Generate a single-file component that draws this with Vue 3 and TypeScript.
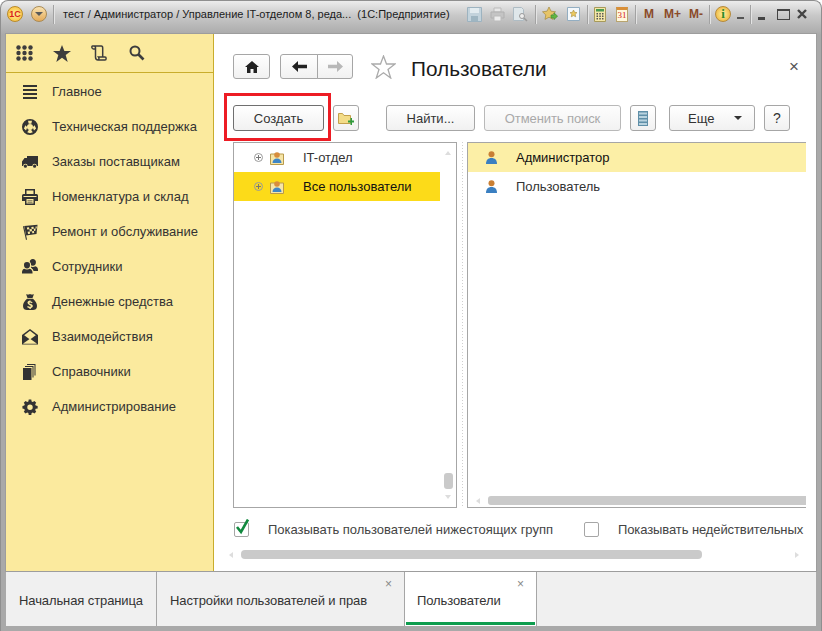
<script setup lang="ts">
interface Part { d: string; fill: string; t?: string }
interface MenuItem { label: string; parts: Part[] }
const ink = '#333333'
const bg = '#fbea9e'
const menu: MenuItem[] = [
  { label: 'Главное', parts: [{ d: 'M1 1h14v2H1zM1 5h14v2H1zM1 9h14v2H1zM1 13h14v2H1z', fill: ink }] },
  { label: 'Техническая поддержка', parts: [
    { d: 'M8 0a8 8 0 1 0 0 16A8 8 0 0 0 8 0zm0 5a3 3 0 1 1 0 6 3 3 0 0 1 0-6z', fill: ink },
    { d: 'M6 1.800h4L9.300 4.800H6.700zM1.900 9.500 3.400 6.200 5.300 8.300 4 11.500zM14.100 9.500 12.600 6.200 10.700 8.300 12 11.500zM5.200 13.200 6.800 11h2.400l1.600 2.200L8 14.200z', fill: bg }
  ] },
  { label: 'Заказы поставщикам', parts: [
    { d: 'M5 2h11v10h-1.200a2.200 2.200 0 0 0-4.400 0H5.600a2.200 2.200 0 0 0-4.400 0H0V7.500L2.500 4H5z', fill: ink },
    { d: 'M3.400 10.600a1.600 1.600 0 1 0 0 3.200 1.600 1.600 0 0 0 0-3.200zM12.600 10.600a1.600 1.600 0 1 0 0 3.200 1.600 1.600 0 0 0 0-3.200z', fill: ink }
  ] },
  { label: 'Номенклатура и склад', parts: [
    { d: 'M3 0h10v5h1.500A1.500 1.500 0 0 1 16 6.500V12h-3v4H3v-4H0V6.500A1.500 1.500 0 0 1 1.500 5H3z', fill: ink },
    { d: 'M4.500 1.500h7V5h-7zM4.500 10h7v4.500h-7zM1.500 7h13v1h-13z', fill: bg },
    { d: 'M5.500 11.500h5v.8h-5zM5.500 13h5v.6h-5z', fill: ink }
  ] },
  { label: 'Ремонт и обслуживание', parts: [
    { d: 'M1 2.500 2 2 5 15.500 4 16z', fill: ink },
    { d: 'M2.200 2 15.500 .8 14.500 10 4.200 11.500z', fill: ink },
    { d: 'M4.800 3.500 7 3.200 7.400 5.300 5.200 5.600zM9.300 3l2.200-.3.300 2.100-2.100.3zM13.600 2.500l1.200-.1-.2 2-1 .1zM7.400 5.300 9.700 5.100 10 7.200l-2.200.3zM11.800 4.800l1.800-.3-.2 2.200-1.400.2zM5.600 7.800 7.800 7.500l.3 2.200-2 .3zM10 7.200l1.900-.3.300 2.100-1.900.3z', fill: bg }
  ] },
  { label: 'Сотрудники', parts: [
    { d: 'M10.800 0a3 3 0 0 1 3.100 3.300c0 2-1 3.400-3.100 3.400S7.700 5.300 7.700 3.300A3 3 0 0 1 10.800 0zM8.300 7.300c1.500 1 3.500 1 5 0 1.800.5 2.700 1.500 2.700 3.400V12h-5z', fill: ink },
    { d: 'M5 1.800a4.100 4.100 0 0 1 4.100 4.400c0 1-.3 1.900-.7 2.600 2.300.6 3.300 2.300 3.300 4.600v1.600H-.8v-1.600c0-2.300 1-4 2.900-4.600-.4-.7-.7-1.600-.7-2.600A4.100 4.100 0 0 1 5 1.800z', fill: bg },
    { d: 'M5 3a3 3 0 0 1 3 3.200C8 8.100 7 9.400 5 9.400S2 8.100 2 6.200A3 3 0 0 1 5 3zM2.200 9.800c1.700 1 3.900 1 5.600 0 1.800.5 2.700 2 2.700 3.800v.9H0v-.9c0-1.800.6-3.300 2.200-3.800z', fill: ink }
  ] },
  { label: 'Денежные средства', parts: [
    { d: 'M4 0c1 .8 2.500.8 4 0 1.500.8 3 .8 4 0l-1.500 4h-5zM5 4.800h6C13.500 7 15 9.500 15 12c0 3-2 4-4 4H5c-2 0-4-1-4-4 0-2.500 1.500-5 4-7.200z', fill: ink },
    { d: 'M7.400 6.500h1.200v1c1 .1 1.700.5 2 .9l-.8.9c-.5-.4-1-.7-1.700-.7-.6 0-.9.2-.9.500 0 .4.500.5 1.400.8 1.300.4 2.200.9 2.200 2.100 0 1-.7 1.700-2 1.900v1H7.400v-1c-1-.1-1.800-.5-2.300-1l.8-1c.6.5 1.300.8 2 .8s1.100-.3 1.100-.6c0-.4-.4-.6-1.400-.9C6.400 10.300 5.500 9.800 5.500 8.600c0-1 .7-1.700 1.900-1.900z', fill: bg }
  ] },
  { label: 'Взаимодействия', parts: [
    { d: 'M8 0 16 6v9.500H0V6z', fill: ink },
    { d: 'M8 1.800 13.800 6.200 8 10.500 2.200 6.200z', fill: bg },
    { d: 'M1.200 14.500 8 9.800l6.800 4.700-.3.300H1.500z', fill: bg }
  ] },
  { label: 'Справочники', parts: [
    { d: 'M1 4h8.500v12H1z', fill: ink },
    { d: 'M3 2h8.500v11.500h-1V3H3zM5 0h8.500v11.500h-1V1H5z', fill: ink }
  ] },
  { label: 'Администрирование', parts: [
    { d: 'M6.500 0h3l.4 2.200 1.400.6L13.200 1.600l2.100 2.100-1.200 1.900.6 1.400 2.300.5v3l-2.300.4-.6 1.400 1.200 1.900-2.100 2.100-1.900-1.200-1.400.6-.4 2.300h-3l-.4-2.300-1.400-.6-1.900 1.200L.7 14.300l1.200-1.900-.6-1.400L-.9 10.500V7.500l2.200-.5.6-1.400L.7 3.700l2.100-2.100 1.900 1.200 1.400-.6zM8 5.800a3.200 3.200 0 1 0 0 6.400 3.200 3.200 0 0 0 0-6.400z', fill: ink, t: 'translate(1.200 .6) scale(.85)' }
  ] }
]
</script>

<template>
  <div class="window">
    <header class="titlebar">
      <div class="logo">1С</div>
      <div class="menu-btn"><span class="menu-tri"></span></div>
      <span class="sep sep-first"></span>
      <span class="win-title">тест / Администратор / Управление IT-отделом 8, реда...&nbsp; (1С:Предприятие)</span>
      <div class="tools">
        <svg class="t t-save" width="15" height="15" viewBox="0 0 15 15"><path d="M.5.500h14v14H.5z" fill="#c3d3dc" stroke="#9db3c0"/><path d="M3 1h9v5H3z" fill="#e3ecf0"/><path d="M4 9h7v5H4z" fill="#9fb6c2"/></svg>
        <svg class="t t-print" width="15" height="15" viewBox="0 0 15 15"><path d="M4 1h7v4H4z" fill="#e8e8e8" stroke="#bbb"/><path d="M1 5h13v6H1z" fill="#c4c4c4" stroke="#b0b0b0"/><path d="M4 9h7v5H4z" fill="#ececec" stroke="#bbb"/></svg>
        <svg class="t t-prev" width="16" height="15" viewBox="0 0 16 15"><path d="M1.500.500h8l2 2v11h-10z" fill="#dfe7ea" stroke="#aebcc4"/><circle cx="10" cy="9" r="2.500" fill="#eee" stroke="#9a9a9a"/><path d="m12 11 3 3" stroke="#9a9a9a" stroke-width="1.500"/></svg>
        <span class="sep"></span>
        <svg class="t t-fav" width="16" height="16" viewBox="0 0 16 16"><path d="m7 1 2 4.200 4.500.6-3.300 3.100.8 4.500L7 11.200l-4 2.200.8-4.500L.5 5.800 5 5.200z" fill="#e6c468" stroke="#a58a3d" stroke-width=".7"/><path d="M9 9h3V6.800l3.600 3.400-3.600 3.400V12H9z" fill="#61b544" stroke="#3c8a28" stroke-width=".6"/></svg>
        <svg class="t t-favdoc" width="13" height="14" viewBox="0 0 13 14"><path d="M.5.500h12v13H.5z" fill="#f4f8fb" stroke="#93aec2"/><path d="m6.500 3 1.100 2.300 2.400.3-1.800 1.700.5 2.500-2.200-1.200-2.200 1.200.5-2.500L3 5.600l2.400-.3z" fill="#ecc95e" stroke="#a58a3d" stroke-width=".6"/></svg>
        <span class="sep"></span>
        <svg class="t t-calc" width="12" height="15" viewBox="0 0 12 15"><path d="M.5.500h11v14H.5z" fill="#f4e7a8" stroke="#a79a5a"/><path d="M2 2h8v2.500H2z" fill="#4b9a52"/><path d="M2.500 6h1.500v1.500H2.500zM5.300 6h1.500v1.500H5.300zM8 6h1.500v1.500H8zM2.500 8.500h1.500V10H2.500zM5.300 8.500h1.500V10H5.300zM8 8.500h1.500V10H8zM2.500 11h1.500v1.500H2.500zM5.300 11h1.500v1.500H5.300zM8 11h1.500v1.500H8z" fill="#555"/></svg>
        <div class="t t-cal"><span>31</span></div>
        <span class="sep"></span>
        <span class="t mem m1">M</span>
        <span class="t mem m2">M+</span>
        <span class="t mem m3">M-</span>
        <span class="sep sep-m"></span>
        <div class="t t-info">i</div>
        <span class="t t-down"></span>
        <span class="sep sep-i"></span>
        <span class="t t-min"></span>
        <span class="t t-max"></span>
        <svg class="t t-close" width="12" height="12" viewBox="0 0 12 12"><path d="m2 2 8 8M10 2l-8 8" stroke="#444" stroke-width="2.400"/></svg>
      </div>
    </header>

    <div class="body">
      <aside class="sidebar">
        <div class="side-head">
          <svg class="h-grid" width="17" height="16" viewBox="0 0 17 16">
            <g fill="#3d3d3d">
              <circle cx="2.500" cy="2.500" r="2.200"/><circle cx="8.500" cy="2.500" r="2.200"/><circle cx="14.500" cy="2.500" r="2.200"/>
              <circle cx="2.500" cy="8" r="2.200"/><circle cx="8.500" cy="8" r="2.200"/><circle cx="14.500" cy="8" r="2.200"/>
              <circle cx="2.500" cy="13.500" r="2.200"/><circle cx="8.500" cy="13.500" r="2.200"/><circle cx="14.500" cy="13.500" r="2.200"/>
            </g>
          </svg>
          <svg class="h-star" width="18" height="17" viewBox="0 0 18 17"><path d="m9 0 2.400 6h6.600l-5.300 4 2 7L9 12.800 3.300 17l2-7L0 6h6.600z" fill="#3d3d3d"/></svg>
          <svg class="h-hist" width="16" height="16" viewBox="0 0 16 16"><path d="M1.500 1h8.800c1 0 1.400 1 1.400 2v9M1.500 1C.5 1 .5 4 2.500 4h2V3c0-1-.6-2-1.500-2M4.500 3v9c0 2 1 3 2.500 3h7c1.500 0 1.500-3 0-3H7.500c.8 1 .5 3-.5 3" fill="none" stroke="#3d3d3d" stroke-width="1.500"/></svg>
          <svg class="h-search" width="16" height="16" viewBox="0 0 16 16"><circle cx="6" cy="6" r="4.500" fill="none" stroke="#3d3d3d" stroke-width="2"/><path d="m9.500 9.500 5 5" stroke="#3d3d3d" stroke-width="2.600"/></svg>
        </div>
        <nav class="side-menu">
          <div v-for="m in menu" :key="m.label" class="side-item">
            <svg class="side-icon" width="16" height="16" viewBox="0 0 16 16">
              <path v-for="(p, i) in m.parts" :key="i" :d="p.d" :fill="p.fill" :transform="p.t" />
            </svg>
            <span>{{ m.label }}</span>
          </div>
        </nav>
      </aside>

      <main class="main">
        <div class="page-head">
          <button class="btn home">
            <svg width="14" height="12" viewBox="0 0 14 12"><path d="M7 0 14 6h-2v6H8.500V8h-3v4H2V6H0z" fill="#222"/></svg>
          </button>
          <div class="nav-group">
            <button class="btn nav-b">
              <svg width="15" height="11" viewBox="0 0 15 11"><path d="M6 0v3.800h9v3.400H6V11L0 5.500z" fill="#222"/></svg>
            </button>
            <button class="btn nav-b nav-r">
              <svg width="15" height="11" viewBox="0 0 15 11"><path d="M9 0v3.800H0v3.400h9V11l6-5.500z" fill="#b8b8b8"/></svg>
            </button>
          </div>
          <svg class="fav-star" width="25" height="24" viewBox="0 0 25 24"><path d="m12.500 1 3 8h8.500l-7 5.500 2.700 8.500-7.200-5.300L5.300 23 8 14.500 1 9h8.500z" fill="#fff" stroke="#ababab" stroke-width="1.300"/></svg>
          <h1 class="page-title">Пользователи</h1>
          <span class="page-close">×</span>
        </div>

        <div class="toolbar">
          <div class="create-wrap">
            <button class="btn create">Создать</button>
            <span class="red-box"></span>
          </div>
          <button class="btn sq folder">
            <svg width="16" height="15" viewBox="0 0 16 15"><path d="M.500 2.500V12.500h12V4.500H6L4.500 2.500z" fill="#f3dc87" stroke="#c3a04c"/><path d="M10 7.500h2.500V5H14v2.500h2V9.500h-2V12h-1.500V9.500H10z" fill="#2f9a3d" transform="translate(0 2)"/></svg>
          </button>
          <button class="btn find">Найти...</button>
          <button class="btn cancel" disabled>Отменить поиск</button>
          <button class="btn sq list">
            <svg width="10" height="15" viewBox="0 0 10 15"><path d="M0 0h10v15H0z" fill="#5f8fa8"/><path d="M1 1.500h8v2H1zM1 5h8v2H1zM1 8.500h8v2H1zM1 12h8v2H1z" fill="#b9d3df"/></svg>
          </button>
          <button class="btn more"><span>Еще</span><i class="tri"></i></button>
          <button class="btn sq help">?</button>
        </div>

        <div class="panels">
          <section class="tree">
            <div class="tree-rows">
              <div class="tree-row">
                <span class="plus"></span>
                <svg class="grp" width="14" height="14" viewBox="0 0 14 14"><path d="M.500 3h13v10.500H.500z" fill="#f6e5a7" stroke="#b89a4c"/><circle cx="7" cy="4" r="2.800" fill="#d78d3d"/><path d="M2.500 12c0-3 2-4.500 4.500-4.500S11.500 9 11.500 12z" fill="#3f86c6"/></svg>
                <span class="tree-text">IT-отдел</span>
              </div>
              <div class="tree-row sel">
                <span class="plus"></span>
                <svg class="grp" width="14" height="14" viewBox="0 0 14 14"><path d="M.500 3h13v10.500H.500z" fill="#f6e5a7" stroke="#b89a4c"/><circle cx="7" cy="4" r="2.800" fill="#d78d3d"/><path d="M2.500 12c0-3 2-4.500 4.500-4.500S11.500 9 11.500 12z" fill="#3f86c6"/></svg>
                <span class="tree-text">Все пользователи</span>
              </div>
            </div>
            <div class="v-scroll">
              <i class="arr up"></i>
              <i class="v-thumb"></i>
              <i class="arr down"></i>
            </div>
          </section>
          <div class="split"></div>
          <section class="list-panel">
            <div class="user-row sel">
              <svg class="usr" width="11" height="13" viewBox="0 0 11 13"><circle cx="5.500" cy="3.200" r="3" fill="#c97f34"/><path d="M0 13c0-4 2-6 5.500-6S11 9 11 13z" fill="#3a7fc1"/></svg>
              <span>Администратор</span>
            </div>
            <div class="user-row">
              <svg class="usr" width="11" height="13" viewBox="0 0 11 13"><circle cx="5.500" cy="3.200" r="3" fill="#c97f34"/><path d="M0 13c0-4 2-6 5.500-6S11 9 11 13z" fill="#3a7fc1"/></svg>
              <span>Пользователь</span>
            </div>
            <div class="h-scroll">
              <i class="arr left"></i>
              <i class="h-thumb"></i>
            </div>
          </section>
        </div>

        <div class="options">
          <span class="check on">
            <svg width="17" height="17" viewBox="0 0 17 17"><path d="m3 8 4 5 7-12.500" fill="none" stroke="#12893f" stroke-width="2.600"/></svg>
          </span>
          <span class="opt opt1">Показывать пользователей нижестоящих групп</span>
          <span class="check"></span>
          <span class="opt opt2">Показывать недействительных</span>
        </div>

        <div class="page-scroll">
          <i class="arr left"></i>
          <i class="page-thumb"></i>
          <i class="arr right"></i>
        </div>
      </main>
    </div>

    <footer class="tabs">
      <div class="tab t1">Начальная страница</div>
      <div class="tab t2">Настройки пользователей и прав<span class="tab-x">×</span></div>
      <div class="tab t3">Пользователи<span class="tab-x">×</span></div>
    </footer>
  </div>
</template>

<style scoped>
.window {
  width: 822px;
  height: 631px;
  box-sizing: border-box;
  display: flex;
  flex-direction: column;
  overflow: hidden;
  border-radius: 8px 8px 0 0;
  border: 1px solid #8f8f8f;
  border-bottom: 0;
  background: linear-gradient(#ececec 0, #c9c9c9 14px, #a9a9a9 34px, #a9a9a9 100%);
  font-family: "Liberation Sans", Arial, sans-serif;
  color: #333;
}
.titlebar {
  height: 33px;
  flex: none;
  display: flex;
  align-items: center;
  padding: 0 0 7px 6px;
  box-sizing: border-box;
}
.logo {
  width: 16px;
  height: 16px;
  box-sizing: border-box;
  border-radius: 50%;
  background: radial-gradient(#fff39a, #f7b52b);
  border: 1px solid #b98a2a;
  color: #d8231c;
  font: bold 9px/14px "Liberation Sans", sans-serif;
  text-align: center;
  flex: none;
}
.menu-btn {
  width: 16px;
  height: 16px;
  box-sizing: border-box;
  margin-left: 8px;
  border-radius: 50%;
  background: linear-gradient(#f9e2b0, #e5ab59);
  border: 1px solid #a98a55;
  display: flex;
  align-items: center;
  justify-content: center;
  flex: none;
}
.menu-tri {
  width: 0;
  height: 0;
  border: 4px solid transparent;
  border-top: 4px solid #5a5a5a;
  border-bottom: 0;
}
.sep {
  width: 1px;
  height: 19px;
  background: #a2a2a2;
  box-shadow: 1px 0 0 #e4e4e4;
  flex: none;
}
.sep-first { margin-left: 6px; }
.win-title {
  margin-left: 9px;
  font-size: 11px;
  color: #1c1c1c;
  white-space: nowrap;
  width: 404px;
  flex: none;
}
.tools { display: flex; align-items: center; flex: none; }
.t { flex: none; }
.t-print { margin-left: 8px; }
.t-prev { margin-left: 7px; }
.t-favdoc { margin-left: 9px; }
.t-cal {
  margin-left: 10px;
  width: 12px;
  height: 15px;
  box-sizing: border-box;
  border: 1px solid #b8a46e;
  border-top: 3px solid #d98f38;
  background: #fff8dd;
  color: #d4201a;
  font: 9px/11px "Liberation Serif", serif;
  text-align: center;
}
.tools .sep { margin-left: 7px; }
.t-fav, .t-calc { margin-left: 6px; }
.mem {
  font: bold 12px/14px "Liberation Sans", sans-serif;
  color: #8a4b2a;
}
.m1 { margin-left: 8px; }
.m2 { margin-left: 10px; }
.m3 { margin-left: 8px; }
.tools .sep-m { margin-left: 6px; }
.t-info {
  margin-left: 5px;
  width: 16px;
  height: 16px;
  border-radius: 50%;
  background: radial-gradient(#fff2a0, #e9a92a);
  border: 1px solid #b68a3a;
  box-sizing: border-box;
  text-align: center;
  color: #2d8a2a;
  font: bold 13px/14px "Liberation Serif", serif;
}
.t-down {
  margin: 8px 0 0 6px;
  width: 7px;
  height: 2px;
  background: #555;
}
.tools .sep-i { margin-left: 6px; }
.t-min {
  margin: 8px 0 0 7px;
  width: 7px;
  height: 3px;
  background: #444;
}
.t-max {
  margin-left: 12px;
  width: 13px;
  height: 11px;
  box-sizing: border-box;
  border: 1px solid #444;
  border-top-width: 2px;
}
.t-close { margin-left: 6px; }

.body {
  flex: 1;
  min-height: 0;
  margin: 0 5px;
  display: flex;
  box-shadow: 0 0 0 1px #9d9d9d;
}
.sidebar {
  width: 207px;
  flex: none;
  background: #fbea9e;
  border-right: 1px solid #c9ad2c;
}
.side-head {
  height: 38px;
  border-bottom: 1px solid #c9ad2c;
  display: flex;
  align-items: center;
  padding-left: 10px;
}
.h-star { margin-left: 20px; }
.h-hist { margin-left: 20px; }
.h-search { margin-left: 22px; }
.side-menu { padding-top: 1px; }
.side-item {
  height: 35px;
  display: flex;
  align-items: center;
  padding-left: 16px;
  font-size: 13px;
  color: #333;
  white-space: nowrap;
}
.side-icon { margin-right: 14px; flex: none; overflow: visible; }

.main {
  flex: 1;
  min-width: 0;
  background: #fff;
  padding: 20px 10px 0 19px;
  display: flex;
  flex-direction: column;
  box-sizing: border-box;
}
.page-head {
  height: 25px;
  display: flex;
  align-items: center;
}
.btn {
  box-sizing: border-box;
  border: 1px solid #a6a6a6;
  border-radius: 3px;
  background: linear-gradient(#fff, #f1f1f1);
  color: #333;
  font-family: "Liberation Sans", Arial, sans-serif;
  font-size: 13px;
  padding: 0;
  height: 26px;
  display: flex;
  align-items: center;
  justify-content: center;
  flex: none;
}
.home { width: 37px; height: 25px; }
.nav-group { margin-left: 10px; display: flex; }
.nav-b { width: 38px; height: 25px; border-radius: 3px 0 0 3px; }
.nav-r { width: 36px; margin-left: -1px; border-radius: 0 3px 3px 0; }
.fav-star { margin-left: 18px; }
.page-title {
  margin: 4px 0 0 15px;
  font-weight: 400;
  font-size: 20.8px;
  color: #1a1a1a;
}
.page-close {
  margin-left: auto;
  margin-right: 7px;
  font-size: 17px;
  color: #555;
}
.toolbar {
  margin-top: 26px;
  display: flex;
  height: 26px;
}
.create-wrap { position: relative; flex: none; }
.create { width: 91px; border-color: #6f6f6f; }
.red-box {
  position: absolute;
  left: -9px;
  top: -12px;
  width: 107px;
  height: 48px;
  box-sizing: border-box;
  border: 3px solid #ed1c24;
  pointer-events: none;
}
.sq { width: 26px; }
.folder { margin-left: 9px; }
.find { margin-left: 27px; width: 89px; }
.cancel { margin-left: 9px; width: 137px; color: #a9a9a9; letter-spacing: -.1px; background: linear-gradient(#fdfdfd, #f2f2f2); border-color: #b9b9b9; }
.list { margin-left: 9px; }
.more { margin-left: 13px; width: 86px; justify-content: flex-start; padding-left: 18px; }
.tri {
  margin-left: 20px;
  width: 0;
  height: 0;
  border: 4px solid transparent;
  border-top: 4px solid #333;
  border-bottom: 0;
}
.help { margin-left: 9px; font-size: 14px; }

.panels {
  margin-top: 11px;
  height: 366px;
  display: flex;
  flex: none;
}
.tree {
  width: 224px;
  box-sizing: border-box;
  border: 1px solid #a6a6a6;
  display: flex;
  flex: none;
}
.tree-rows { width: 206px; flex: none; }
.tree-row {
  height: 29px;
  display: flex;
  align-items: center;
  font-size: 13px;
}
.tree-row.sel { background: #fcdb19; color: #111; }
.plus {
  width: 7px;
  height: 7px;
  margin-left: 20px;
  border: 1px solid #9a9a9a;
  border-radius: 50%;
  background:
    linear-gradient(#777, #777) center / 5px 1px no-repeat,
    linear-gradient(#777, #777) center / 1px 5px no-repeat;
  flex: none;
}
.grp { margin-left: 7px; flex: none; }
.tree-text { margin-left: 19px; }
.v-scroll {
  flex: 1;
  display: flex;
  flex-direction: column;
  align-items: center;
  padding: 8px 0 8px;
}
.v-thumb {
  margin-top: auto;
  width: 9px;
  height: 16px;
  border-radius: 3px;
  background: #cacaca;
}
.arr { display: block; width: 0; height: 0; border: 3px solid transparent; flex: none; }
.arr.up { border-bottom: 4px solid #ddd; border-top: 0; }
.arr.down { margin-top: 6px; border-top: 4px solid #ddd; border-bottom: 0; }
.arr.left { border-right: 4px solid #ddd; border-left: 0; }
.arr.right { border-left: 4px solid #ddd; border-right: 0; }
.split {
  width: 10px;
  flex: none;
  background: linear-gradient(#cfcfcf 50%, transparent 50%) 5px 0 / 1px 3px repeat-y;
}
.list-panel {
  width: 339px;
  box-sizing: border-box;
  border: 1px solid #a6a6a6;
  border-right: 0;
  display: flex;
  flex-direction: column;
  flex: none;
}
.user-row {
  height: 29px;
  display: flex;
  align-items: center;
  font-size: 13px;
  letter-spacing: -.03px;
  padding-left: 18px;
  flex: none;
}
.user-row.sel { background: #fcefa6; color: #111; }
.usr { margin-right: 19px; flex: none; }
.h-scroll {
  margin-top: auto;
  height: 9px;
  margin-bottom: 2px;
  display: flex;
  align-items: center;
  padding-left: 8px;
}
.h-thumb { margin-left: 8px; flex: 1; height: 9px; background: #cacaca; border-radius: 3px 0 0 3px; }
.options {
  margin-top: 14px;
  height: 15px;
  display: flex;
  align-items: center;
  font-size: 13px;
  color: #444;
  flex: none;
  white-space: nowrap;
}
.check {
  margin-left: 1px;
  width: 15px;
  height: 15px;
  box-sizing: border-box;
  border: 1px solid #a6a6a6;
  border-radius: 2px;
  position: relative;
  flex: none;
}
.check svg { position: absolute; left: -1px; top: -4px; }
.opt1 { margin-left: 19px; width: 297px; letter-spacing: -.02px; }
.opt1 + .check { margin-left: 19px; }
.opt2 { margin-left: 19px; letter-spacing: -.1px; }
.page-scroll {
  margin: 13px 0 0 -4px;
  height: 9px;
  display: flex;
  align-items: center;
  flex: none;
  width: 570px;
}
.page-thumb { margin-left: 8px; width: 461px; height: 9px; background: #cacaca; border-radius: 4px; flex: none; }
.page-scroll .right { margin-left: auto; }

.tabs {
  height: 54px;
  flex: none;
  margin: 1px 5px 5px;
  background: #f0f0f0;
  display: flex;
  font-size: 13px;
  letter-spacing: -.1px;
  color: #333;
}
.tab {
  height: 100%;
  box-sizing: border-box;
  border-right: 1px solid #a6a6a6;
  position: relative;
  display: flex;
  align-items: center;
  white-space: nowrap;
  padding-top: 2px;
  padding-left: 13px;
}
.t1 { width: 151px; }
.t2 { width: 248px; }
.t3 { width: 132px; padding-left: 12px; background: #fff; }
.t3::after {
  content: "";
  position: absolute;
  left: 1px;
  right: 1px;
  bottom: 1px;
  height: 3px;
  background: #0f9d4f;
}
.tab-x {
  position: absolute;
  right: 12px;
  top: 5px;
  font-size: 12px;
  color: #888;
}
</style>

<style>
html, body { margin: 0; background: #fff; }
</style>
